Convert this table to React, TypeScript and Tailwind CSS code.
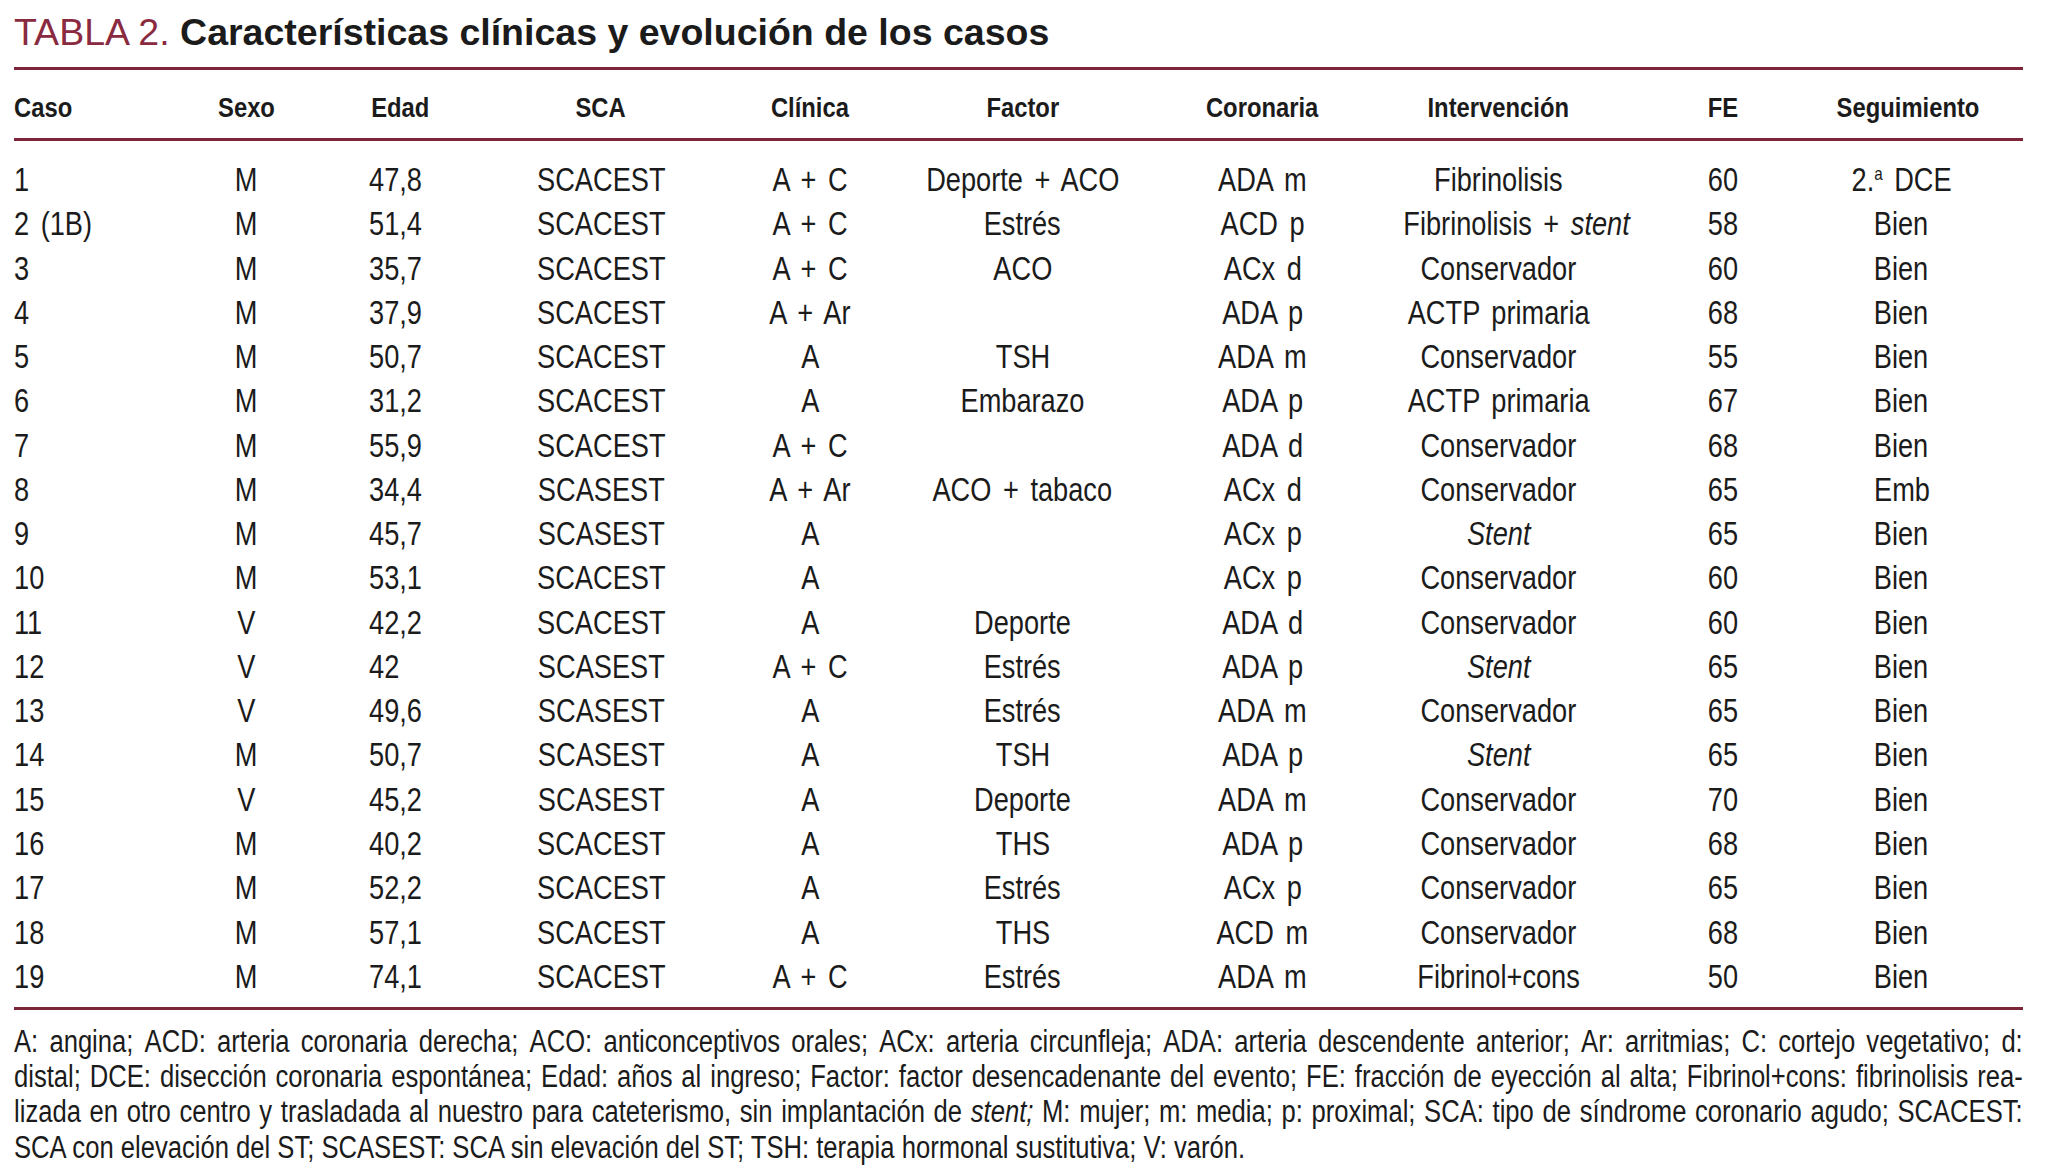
import React from "react";

type Cell = { t: string; i?: boolean };
const rows: (string | Cell[])[][] = [
  ["1", "M", "47,8", "SCACEST", "A + C", "Deporte + ACO", "ADA m", "Fibrinolisis", "60", "SUP"],
  ["2 (1B)", "M", "51,4", "SCACEST", "A + C", "Estrés", "ACD p", [{ t: "Fibrinolisis + " }, { t: "stent", i: true }], "58", "Bien"],
  ["3", "M", "35,7", "SCACEST", "A + C", "ACO", "ACx d", "Conservador", "60", "Bien"],
  ["4", "M", "37,9", "SCACEST", "A + Ar", "", "ADA p", "ACTP primaria", "68", "Bien"],
  ["5", "M", "50,7", "SCACEST", "A", "TSH", "ADA m", "Conservador", "55", "Bien"],
  ["6", "M", "31,2", "SCACEST", "A", "Embarazo", "ADA p", "ACTP primaria", "67", "Bien"],
  ["7", "M", "55,9", "SCACEST", "A + C", "", "ADA d", "Conservador", "68", "Bien"],
  ["8", "M", "34,4", "SCASEST", "A + Ar", "ACO + tabaco", "ACx d", "Conservador", "65", "Emb"],
  ["9", "M", "45,7", "SCASEST", "A", "", "ACx p", [{ t: "Stent", i: true }], "65", "Bien"],
  ["10", "M", "53,1", "SCACEST", "A", "", "ACx p", "Conservador", "60", "Bien"],
  ["11", "V", "42,2", "SCACEST", "A", "Deporte", "ADA d", "Conservador", "60", "Bien"],
  ["12", "V", "42", "SCASEST", "A + C", "Estrés", "ADA p", [{ t: "Stent", i: true }], "65", "Bien"],
  ["13", "V", "49,6", "SCASEST", "A", "Estrés", "ADA m", "Conservador", "65", "Bien"],
  ["14", "M", "50,7", "SCASEST", "A", "TSH", "ADA p", [{ t: "Stent", i: true }], "65", "Bien"],
  ["15", "V", "45,2", "SCASEST", "A", "Deporte", "ADA m", "Conservador", "70", "Bien"],
  ["16", "M", "40,2", "SCACEST", "A", "THS", "ADA p", "Conservador", "68", "Bien"],
  ["17", "M", "52,2", "SCACEST", "A", "Estrés", "ACx p", "Conservador", "65", "Bien"],
  ["18", "M", "57,1", "SCACEST", "A", "THS", "ACD m", "Conservador", "68", "Bien"],
  ["19", "M", "74,1", "SCACEST", "A + C", "Estrés", "ADA m", "Fibrinol+cons", "50", "Bien"],
];

const headers = ["Caso", "Sexo", "Edad", "SCA", "Clínica", "Factor", "Coronaria", "Intervención", "FE", "Seguimiento"];

const notes = [
  "A: angina; ACD: arteria coronaria derecha; ACO: anticonceptivos orales; ACx: arteria circunfleja; ADA: arteria descendente anterior; Ar: arritmias; C: cortejo vegetativo; d:",
  "distal; DCE: disección coronaria espontánea; Edad: años al ingreso; Factor: factor desencadenante del evento; FE: fracción de eyección al alta; Fibrinol+cons: fibrinolisis rea-",
  "lizada en otro centro y trasladada al nuestro para cateterismo, sin implantación de *stent; M: mujer; m: media; p: proximal; SCA: tipo de síndrome coronario agudo; SCACEST:",
];

const grid =
  "grid grid-cols-[156px_153px_154px_248px_170px_255px_225px_247px_202px_155px_1fr]";

function renderCell(v: string | Cell[]) {
  if (v === "SUP") {
    return (
      <>
        2.<span className="relative -top-[11px] text-[19px] leading-none">a</span> DCE
      </>
    );
  }
  if (typeof v === "string") return v;
  return v.map((c, k) => (
    <span key={k} className={c.i ? "italic" : ""}>
      {c.t}
    </span>
  ));
}

export default function App() {
  return (
    <div className="min-h-screen w-[2045px] overflow-hidden bg-white pl-[14px] pr-[22px] text-[#1b1b1b]">
      <div className="pt-[14px] font-['Liberation_Sans',Arial,sans-serif] text-[37.5px] leading-[37px] whitespace-nowrap">
        <span className="text-[#8a2a40]">TABLA 2. </span>
        <span className="font-bold">Características clínicas y evolución de los casos</span>
      </div>
      <div className="mt-[16px] h-[3px] bg-[#7e2639]" />
      <div className="font-['Liberation_Sans',Arial,sans-serif]">
        <div className={`${grid} h-[68px] items-center pt-[7px] text-[28px] leading-[28px] font-bold whitespace-nowrap`}>
          {headers.map((h, i) => (
            <div key={h} className={i === 0 ? "text-left" : "text-center"}>
              <span className={`inline-block scale-x-[0.85] ${i === 0 ? "origin-left" : "origin-center"}`}>{h}</span>
            </div>
          ))}
        </div>
        <div className="h-[3px] bg-[#7e2639]" />
        <div className="pt-[16px] text-[34px] [word-spacing:5px]">
          {rows.map((r, ri) => (
            <div key={ri} className={`${grid} h-[44.27px] items-center leading-[44.27px] whitespace-nowrap`}>
              {r.map((v, ci) => (
                <div
                  key={ci}
                  className={
                    ci === 0 ? "text-left" : ci === 2 ? "text-left pl-[46px]" : "text-center"
                  }
                >
                  <span
                    className={`inline-block scale-x-[0.8] ${
                      ci === 0 || ci === 2 ? "origin-left" : "origin-center"
                    }`}
                  >
                    {renderCell(v)}
                  </span>
                </div>
              ))}
            </div>
          ))}
        </div>
        <div className="mt-[9px] h-[3px] bg-[#7e2639]" />
        <div className="mt-[14px] w-[2009px] text-[31px] leading-[35.2px]">
          <div className="w-[2432px] origin-left scale-x-[0.826]">
            {notes.map((line, li) => (
              <div key={li} className="flex justify-between gap-x-[5px] whitespace-nowrap">
                {line.split(" ").map((w, wi) =>
                  w.startsWith("*") ? (
                    <span key={wi} className="italic">
                      {w.slice(1)}
                    </span>
                  ) : (
                    <span key={wi}>{w}</span>
                  )
                )}
              </div>
            ))}
            <div className="whitespace-nowrap">
              SCA con elevación del ST; SCASEST: SCA sin elevación del ST; TSH: terapia hormonal sustitutiva; V: varón.
            </div>
          </div>
        </div>
      </div>
    </div>
  );
}
